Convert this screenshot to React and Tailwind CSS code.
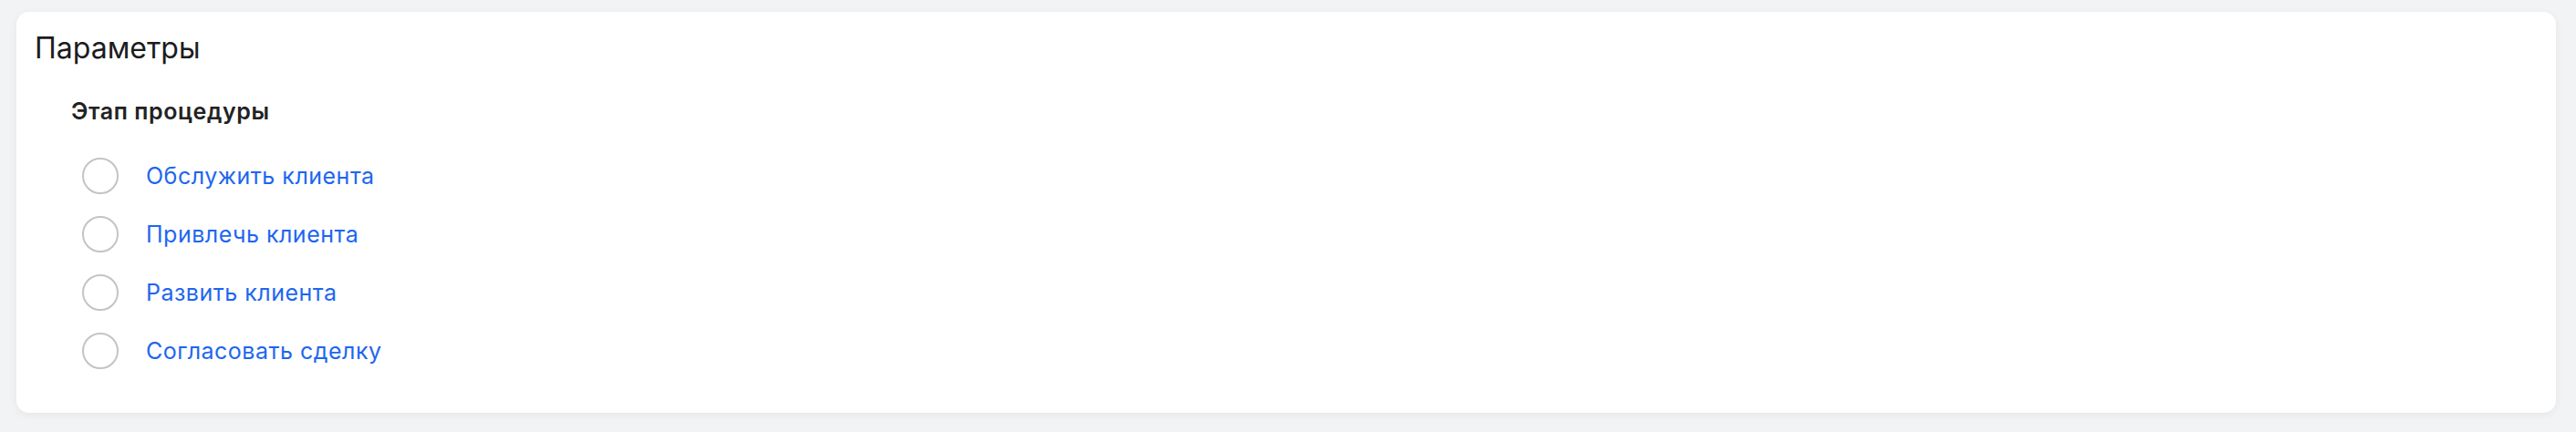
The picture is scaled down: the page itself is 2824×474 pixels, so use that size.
const STAGES = [
  'Обслужить клиента',
  'Привлечь клиента',
  'Развить клиента',
  'Согласовать сделку',
];

export default function App() {
  return (
    <div className="min-h-screen bg-[#f2f3f5] pl-[18px] pr-[22px] pt-[13px] pb-[19px] font-['Inter','Noto_Sans',sans-serif]">
      <div className="rounded-[14px] bg-white px-5 pt-5 pb-[36px] shadow-[0_2px_10px_rgba(0,0,0,0.06)]">
        {/* Header */}
        <h2 className="text-[32px] leading-[39px] text-[#1c1c1e]">Параметры</h2>

        {/* Stage group */}
        <div className="ml-10 mt-[35px]">
          <p className="text-[25px] leading-[30px] font-semibold tracking-[0.6px] text-[#222]">
            Этап процедуры
          </p>
          <div className="mt-[24px] flex flex-col">
            {STAGES.map((s) => (
              <label key={s} className="flex h-16 items-center cursor-pointer">
                <span className="ml-3 h-10 w-10 rounded-full border-2 border-[#c4c4c4] bg-white" />
                <span className="ml-[30px] text-[25px] leading-[30px] tracking-[0.5px] text-[#1d66f0]">
                  {s}
                </span>
              </label>
            ))}
          </div>
        </div>
      </div>
    </div>
  );
}
